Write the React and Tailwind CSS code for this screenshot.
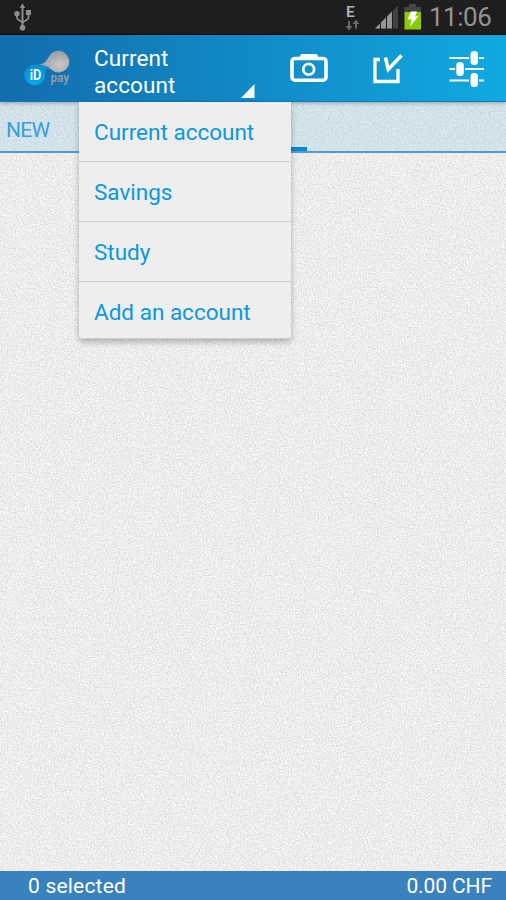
const accounts = ["Current account", "Savings", "Study", "Add an account"];

function Grain() {
  return (
    <svg className="pointer-events-none absolute inset-0 h-full w-full" aria-hidden="true">
      <filter id="grain" x="0" y="0" width="100%" height="100%" colorInterpolationFilters="sRGB">
        <feTurbulence type="fractalNoise" baseFrequency="0.67" numOctaves="3" seed="4" />
        <feColorMatrix values="0.22 0 0 0 0.822  0.21 0.01 0 0 0.817  0.21 0 0.01 0 0.815  0 0 0 0 1" />
      </filter>
      <rect width="100%" height="100%" filter="url(#grain)" />
    </svg>
  );
}

function StatusBar() {
  return (
    <div className="flex h-[35px] shrink-0 items-center border-b border-black bg-[#1e1e1e] pl-[14px] pr-[14px]">
      <svg width="18" height="28" viewBox="0 0 18 28" fill="#8e8e8e" stroke="#8e8e8e">
        <path d="M8.5 0.5l2.8 4.500H5.700z" stroke="none" />
        <path d="M8.5 4v19" fill="none" strokeWidth="2" />
        <path d="M3 10v4.5q0 1.5 1.5 2.2l4 2.5 4.500-2.500q1.500-.7 1.500-2.200V9" fill="none" strokeWidth="1.7" />
        <circle cx="3" cy="10.700" r="2.700" stroke="none" />
        <rect x="12" y="7" width="5" height="5" stroke="none" />
        <circle cx="8.500" cy="24.800" r="2.800" stroke="none" />
      </svg>
      <div className="ml-auto flex items-center">
        <div className="flex w-[16px] flex-col items-start">
          <span className="mt-[3px] h-[13px] pl-px text-[15.5px] leading-[13px] font-semibold text-[#b4b4b4]">E</span>
          <svg width="15" height="12" viewBox="0 0 15 12" fill="#686868">
            <path d="M3 2h2v5h2.500L4 11.500.5 7H3zM10 9.500h2V5h2.500L11 .5 7.500 5H10z" />
          </svg>
        </div>
        <svg className="ml-[14px]" width="24" height="24" viewBox="0 0 24 24">
          <path d="M0 23.500L23 .5v23z" fill="#424242" />
          <path d="M0 23.500L17 6.500v17z" fill="#969696" />
          <path d="M5.500 17v7M11.500 11v13M17.500 5v19" stroke="#1e1e1e" strokeWidth="1" />
        </svg>
        <svg className="ml-[5px]" width="18" height="26" viewBox="0 0 18 26">
          <path d="M5 0h7v3h5v6H.5V3H5z" fill="#464646" />
          <path d="M.5 8h16.500v17.500H.5z" fill="#8ccb00" />
          <path d="M7 7.500h6l-2 5 3.500-.5L6 22.500l1.500-7.500-4 .5z" fill="#fff" />
        </svg>
        <span className="ml-[7px] w-[63px] whitespace-nowrap text-[26px] leading-[34px] tracking-[-0.5px] text-[#939393]">11:06</span>
      </div>
    </div>
  );
}

function Logo() {
  return (
    <svg width="48" height="40" viewBox="0 0 48 40">
      <defs>
        <radialGradient id="silver" cx="0.7" cy="0.65" r="0.7">
          <stop offset="0" stopColor="#c9c9c9" />
          <stop offset="1" stopColor="#96969a" />
        </radialGradient>
        <linearGradient id="aqua" x1="0" y1="0" x2="0" y2="1">
          <stop offset="0" stopColor="#078fd1" />
          <stop offset="1" stopColor="#05a8ec" />
        </linearGradient>
      </defs>
      <path d="M14 17.500C21 17.500 23 13 25.500 8.500A10.800 10.800 0 1 1 31.500 25C27 23.500 24 18 14 17.500z" fill="url(#silver)" />
      <path d="M12 17.500c5 0 6 2.500 14 2-4 1.500-4.500 4.500-4.800 7.500A10.400 10.400 0 1 1 12 17.500z" fill="url(#aqua)" />
      <text x="5.800" y="32.700" fill="#fff" fontSize="14.500" fontWeight="600" textLength="11.500" lengthAdjust="spacingAndGlyphs">iD</text>
      <text x="26.500" y="34.500" fill="#8e9ba7" fontSize="12.500" fontWeight="700" textLength="18.500" lengthAdjust="spacingAndGlyphs">pay</text>
    </svg>
  );
}

function ActionBar() {
  return (
    <header className="relative z-10 flex h-[67px] shrink-0 items-start border-b border-[#1078b8] bg-linear-to-r from-[#126dad] to-[#10a9e1] shadow-[0_1px_4px_rgba(0,0,0,0.3)]">
      <div className="mt-[12px] ml-[24px]">
        <Logo />
      </div>
      <button className="mt-[10px] ml-[21px] flex w-[163px] items-end justify-between text-left text-[22.500px] leading-[26.500px] tracking-[0.1px] text-white">
        <span className="w-[110px] pl-px">Current account</span>
        <svg width="15" height="14" viewBox="0 0 15 14" fill="#f4f8fc">
          <path d="M0 14L13.500 0v14z" />
        </svg>
      </button>
      <button className="mt-[18px] ml-[34px]">
        <svg width="38" height="30" viewBox="0 0 38 30" fill="none" stroke="#fff">
          <path d="M10 5V3.500q0-2.500 2.500-2.500h13q2.500 0 2.500 2.500V5z" fill="#fff" stroke="none" />
          <rect x="2" y="5.500" width="34" height="21.700" rx="3" strokeWidth="3.600" />
          <circle cx="18.700" cy="16.300" r="5.400" strokeWidth="2.700" />
        </svg>
      </button>
      <button className="mt-[19px] ml-[45px]">
        <svg width="30" height="30" viewBox="0 0 30 30" fill="none" stroke="#fff" strokeWidth="3.300">
          <path d="M7 5.500H2v22H25V15" />
          <path d="M12.500 3.500L15.200 15.500L28.500 1.500" strokeWidth="3.500" />
        </svg>
      </button>
      <button className="mt-[15px] ml-[46px]">
        <svg width="36" height="38" viewBox="0 0 36 38" fill="#fff">
          <path d="M.5 7h19.500v2H.5zM30 7h5v2h-5zM.5 18H6v2H.5zM16 18h19v2H16zM.5 29.500H20v2H.5zM30 29.500h5v2h-5z" />
          <rect x="21.500" y="1" width="7.500" height="14" rx="3.500" />
          <rect x="7.300" y="12" width="7.500" height="14" rx="3.500" />
          <rect x="21.500" y="23" width="7.500" height="14" rx="3.500" />
        </svg>
      </button>
    </header>
  );
}

function AccountMenu() {
  return (
    <ul className="absolute top-[102px] left-[79px] z-20 w-[212px] rounded-b-[3px] bg-[#eeeeee] shadow-[0_3px_6px_rgba(0,0,0,0.28)]">
      {accounts.map((name) => (
        <li
          key={name}
          className="flex h-[60px] items-center border-b border-[#cecece] px-[15px] pt-[3px] text-[22.500px] text-[#0a98e0] last:h-[57px] last:rounded-b-[3px] last:pt-[6px]"
        >
          {name}
        </li>
      ))}
    </ul>
  );
}

export default function App() {
  return (
    <div className="relative flex h-[900px] w-[506px] flex-col overflow-hidden bg-[#eeedec] font-['Roboto',sans-serif]">
      <StatusBar />
      <ActionBar />
      <AccountMenu />
      <main className="relative flex flex-1 flex-col">
        <Grain />
        <div className="relative flex h-[51px] items-end border-b-2 border-[#4f9ad8] bg-[#85c3e8]/25">
          <span className="flex w-[200px] self-center pt-[8px] pl-[6px] text-[21px] tracking-[-0.7px] text-[#36a0da]">NEW</span>
          <span className="h-[4px] w-[107px] bg-[#0788d3]" />
        </div>
      </main>
      <footer className="flex h-[29px] shrink-0 items-center justify-between bg-[#3a82bd] pt-[3px] pr-[14px] pl-[28px] text-[21px] text-white">
        <span className="tracking-[0.2px]">0 selected</span>
        <span className="tracking-[-0.1px]">0.00 CHF</span>
      </footer>
    </div>
  );
}
